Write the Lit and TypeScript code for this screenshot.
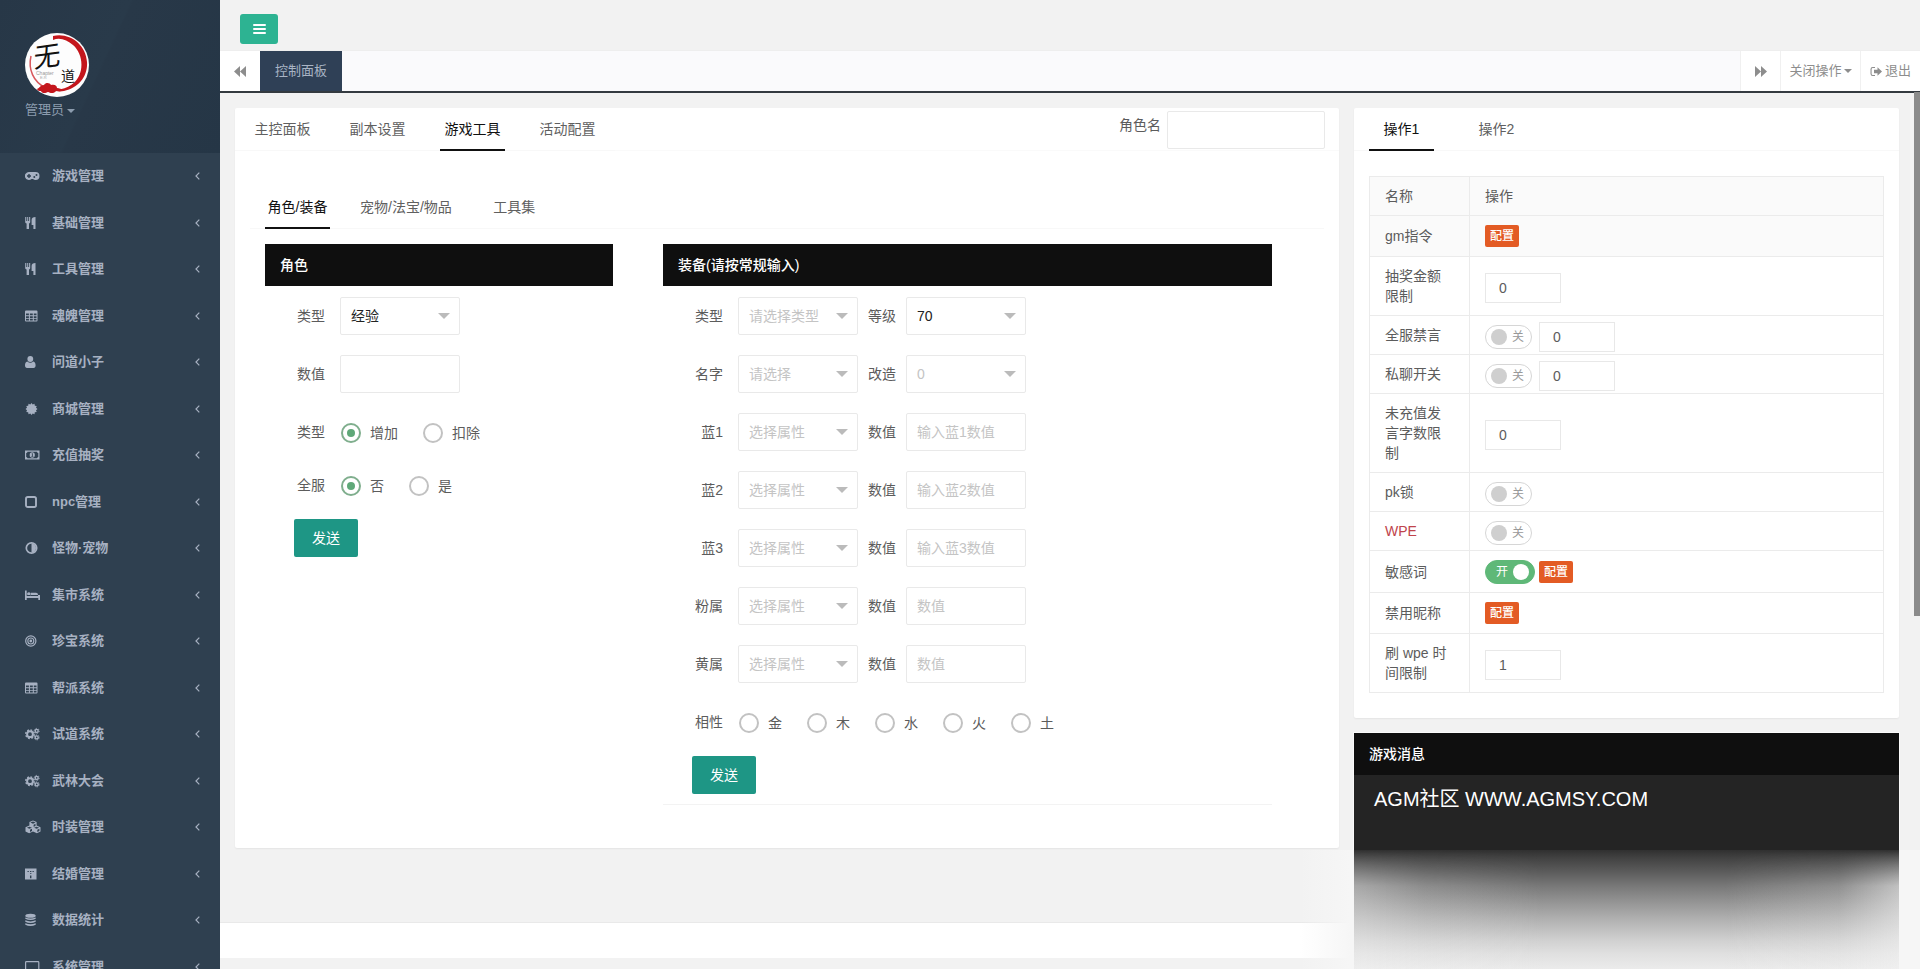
import { LitElement, html, svg, css, nothing } from 'lit';
import type { TemplateResult } from 'lit';
import { customElement, property, state } from 'lit/decorators.js';
import { classMap } from 'lit/directives/class-map.js';

interface MenuItem {
  icon: string;
  label: string;
}

interface Field {
  label: string;
  text?: string;
  select?: boolean;
  filled?: boolean;
}

interface Control {
  kind: 'badge' | 'input' | 'switch';
  value?: string;
  on?: boolean;
}

interface TableRow {
  name: string;
  height: number;
  controls: Control[];
  red?: boolean;
  shaded?: boolean;
}

const MENU: MenuItem[] = [
  { icon: 'gamepad', label: '游戏管理' },
  { icon: 'cutlery', label: '基础管理' },
  { icon: 'cutlery', label: '工具管理' },
  { icon: 'table', label: '魂魄管理' },
  { icon: 'user', label: '问道小子' },
  { icon: 'certificate', label: '商城管理' },
  { icon: 'money', label: '充值抽奖' },
  { icon: 'square', label: 'npc管理' },
  { icon: 'adjust', label: '怪物·宠物' },
  { icon: 'bed', label: '集市系统' },
  { icon: 'target', label: '珍宝系统' },
  { icon: 'table', label: '帮派系统' },
  { icon: 'cogs', label: '试道系统' },
  { icon: 'cogs', label: '武林大会' },
  { icon: 'cubes', label: '时装管理' },
  { icon: 'building', label: '结婚管理' },
  { icon: 'database', label: '数据统计' },
  { icon: 'desktop', label: '系统管理' },
];

const EQUIPMENT: [Field, Field][] = [
  [
    { label: '类型', text: '请选择类型', select: true },
    { label: '等级', text: '70', select: true, filled: true },
  ],
  [
    { label: '名字', text: '请选择', select: true },
    { label: '改造', text: '0', select: true },
  ],
  [
    { label: '蓝1', text: '选择属性', select: true },
    { label: '数值', text: '输入蓝1数值' },
  ],
  [
    { label: '蓝2', text: '选择属性', select: true },
    { label: '数值', text: '输入蓝2数值' },
  ],
  [
    { label: '蓝3', text: '选择属性', select: true },
    { label: '数值', text: '输入蓝3数值' },
  ],
  [
    { label: '粉属', text: '选择属性', select: true },
    { label: '数值', text: '数值' },
  ],
  [
    { label: '黄属', text: '选择属性', select: true },
    { label: '数值', text: '数值' },
  ],
];

const ROWS: TableRow[] = [
  { name: 'gm指令', height: 41, controls: [{ kind: 'badge' }], shaded: true },
  { name: '抽奖金额限制', height: 59, controls: [{ kind: 'input', value: '0' }] },
  {
    name: '全服禁言',
    height: 39,
    controls: [{ kind: 'switch' }, { kind: 'input', value: '0' }],
  },
  {
    name: '私聊开关',
    height: 39,
    controls: [{ kind: 'switch' }, { kind: 'input', value: '0' }],
  },
  {
    name: '未充值发言字数限制',
    height: 79,
    controls: [{ kind: 'input', value: '0' }],
  },
  { name: 'pk锁', height: 39, controls: [{ kind: 'switch' }] },
  { name: 'WPE', height: 39, controls: [{ kind: 'switch' }], red: true },
  {
    name: '敏感词',
    height: 42,
    controls: [{ kind: 'switch', on: true }, { kind: 'badge' }],
  },
  { name: '禁用昵称', height: 41, controls: [{ kind: 'badge' }] },
  {
    name: '刷 wpe 时间限制',
    height: 59,
    controls: [{ kind: 'input', value: '1' }],
  },
];

// 16 x 14 glyphs
const ICONS: Record<string, TemplateResult> = {
  gamepad: svg`<path fill-rule="evenodd" d="M4 3h6.500a4 4 0 0 1 0 8c-1 0-1.800-.4-2.500-1H6.500A4 4 0 1 1 4 3zM3.300 5v1.300H2v1.400h1.300V9h1.400V7.700H6V6.300H4.700V5zM9.300 7a1 1 0 1 0 0 2 1 1 0 0 0 0-2zM11.500 5a1 1 0 1 0 0 2 1 1 0 0 0 0-2z"/>`,
  cutlery: svg`<path d="M.2 1h1.100v4h.9V1h1v4h.9V1h1.100v5c0 .8-.5 1.300-1.200 1.600V13H1.600V7.600C.8 7.300.2 6.800.2 6zM10.500 1v12H8.400V9H6.600V4c0-1.700 1.300-3 3.900-3z"/>`,
  table: svg`<path fill-rule="evenodd" d="M1 1.500h10.500a1 1 0 0 1 1 1v9a1 1 0 0 1-1 1H1a1 1 0 0 1-1-1v-9a1 1 0 0 1 1-1zM1 4.500v1.700h2.900V4.500zm3.900 0v1.700h2.900V4.500zm3.900 0v1.700h2.700V4.500zM1 7.200v1.700h2.900V7.200zm3.900 0v1.700h2.900V7.200zm3.900 0v1.700h2.700V7.200zM1 9.800v1.700h2.900V9.800zm3.900 0v1.700h2.900V9.800zm3.900 0v1.700h2.700V9.800z"/>`,
  user: svg`<circle cx="5.300" cy="4" r="2.900"/><path d="M2.300 6.500a4.500 4.500 0 0 0 6 0C9.800 6.800 10.600 8.500 10.600 10.500c0 1.500-.8 2.500-2 2.500H2C.8 13 0 12 0 10.500c0-2 .8-3.700 2.300-4z"/>`,
  certificate: svg`<path d="M6.500 1l1.200 1.500L9.500 1.800l.3 1.900 1.900.3-.7 1.800L12.500 7 11 8.200l.7 1.800-1.900.3-.3 1.900-1.800-.7L6.500 13l-1.200-1.500-1.800.7-.3-1.900L1.300 10 2 8.200.5 7 2 5.800 1.300 4l1.900-.3.300-1.900 1.800.7z"/>`,
  money: svg`<path fill-rule="evenodd" d="M0 2.500h14.500v9H0zM2.500 3.700A1.500 1.500 0 0 1 1.200 5v4a1.500 1.500 0 0 1 1.300 1.300H12A1.500 1.500 0 0 1 13.300 9V5A1.500 1.500 0 0 1 12 3.700zM7.250 4.300a2.600 2.700 0 1 1 0 5.400 2.600 2.700 0 0 1 0-5.400zM6.400 6h.5v2h-.5v.7h1.900V8h-.5V5.300h-.6z"/>`,
  square: svg`<rect x="1" y="2" width="10" height="10" rx="1.800" fill="none" stroke="currentColor" stroke-width="1.900"/>`,
  adjust: svg`<circle cx="6.500" cy="7" r="5.200" fill="none" stroke="currentColor" stroke-width="1.700"/><path d="M6.500 2.500v9a4.500 4.500 0 0 0 0-9z"/>`,
  bed: svg`<path d="M0 2.500h1.700V8H13V6.800a2 2 0 0 0-2-2H6v2.500h-.8A1.800 1.800 0 1 0 2.400 7H15v5h-1.700v-2H1.700v2H0z"/>`,
  target: svg`<circle cx="5.800" cy="7" r="5.100" fill="none" stroke="currentColor" stroke-width="1.200"/><circle cx="5.800" cy="7" r="3" fill="none" stroke="currentColor" stroke-width="1.100"/><circle cx="5.800" cy="7" r="1.400"/>`,
  cogs: svg`<circle cx="5" cy="7.200" r="2.900" fill="none" stroke="currentColor" stroke-width="2"/><circle cx="5" cy="7.200" r="4.300" fill="none" stroke="currentColor" stroke-width="1.400" stroke-dasharray="1.800 1.570"/><circle cx="11.700" cy="3.900" r="1.500" fill="none" stroke="currentColor" stroke-width="1.400"/><circle cx="11.700" cy="3.900" r="2.500" fill="none" stroke="currentColor" stroke-width=".9" stroke-dasharray="1.300 1.300"/><circle cx="11.700" cy="10.400" r="1.500" fill="none" stroke="currentColor" stroke-width="1.400"/><circle cx="11.700" cy="10.400" r="2.500" fill="none" stroke="currentColor" stroke-width=".9" stroke-dasharray="1.300 1.300"/>`,
  cubes: svg`<path fill-rule="evenodd" d="M8 .5l3.600 1.400v3.700L15.500 7.200v4.200L11.900 13.300 8 11.500 4.100 13.300.5 11.400V7.200l3.900-1.600V1.900zM5.400 2.600 8 3.700l2.600-1.100L8 1.600zM8.600 4.700v2.100L10.500 6V3.800zM1.900 7.700l2.500 1.100 2.500-1.100-2.500-1zM5 9.700v2.300l2-1V8.800zM9.100 7.700l2.500 1.100 2.500-1.100-2.500-1zM12.300 9.700v2.300l2.100-1V8.800z"/>`,
  building: svg`<path fill-rule="evenodd" d="M0 1.500h11.500v11H0zM2.500 4v.9h1.300V4zm5 0v.9h1.300V4zM5 4v.9h1.400V4zm0 2.200v.9h1.400v-.9zm0 2.200v2.800h1.400V8.400z"/>`,
  database: svg`<ellipse cx="5.500" cy="2.800" rx="5.200" ry="2"/><path d="M.3 4.400q5.200 2.300 10.400 0v1.400q-5.200 2.600-10.400 0zM.3 7.300q5.200 2.300 10.400 0v1.400q-5.200 2.600-10.400 0zM.3 10.200q5.200 2.300 10.400 0v1.600q-5.200 2.600-10.400 0z"/>`,
  desktop: svg`<rect x=".6" y="1.600" width="13.200" height="9" rx=".8" fill="none" stroke="currentColor" stroke-width="1.200"/><path d="M5.500 11h3.500l.6 2.300H5z"/>`,
};

@customElement('side-menu')
export class SideMenu extends LitElement {
  static styles = css`
    :host {
      display: block;
      width: 220px;
      height: 100%;
      overflow: hidden;
      background: #2f4050;
      color: #a7b1c2;
      font-size: 13px;
    }

    .profile {
      box-sizing: border-box;
      height: 153px;
      padding: 33px 25px 0;
      background: linear-gradient(115deg, #273747 0%, #293a4a 45%, #283848 46%, #253646 100%);
      color: #8c9cae;
    }

    .logo {
      display: block;
      width: 64px;
      height: 64px;
    }

    .account {
      display: flex;
      align-items: center;
      gap: 3px;
      height: 26px;
    }

    .caret {
      border: 4px solid transparent;
      border-top-color: currentColor;
      border-bottom: 0;
      margin-top: 2px;
    }

    .entry {
      display: flex;
      align-items: center;
      height: 46.500px;
      padding: 0 20px 0 25px;
      font-weight: 600;
    }

    .icon {
      width: 16px;
      height: 14px;
      margin-right: 11px;
      fill: currentColor;
    }

    .label {
      flex: 1;
    }

    .arrow {
      width: 5px;
      height: 8px;
      fill: none;
      stroke: currentColor;
      stroke-width: 1.200;
    }
  `;

  render() {
    return html`
      <div class="profile">
        ${this.renderLogo()}
        <div class="account">管理员<span class="caret"></span></div>
      </div>
      ${MENU.map(
        (item) => html`<div class="entry">
          <svg class="icon" viewBox="0 0 16 14">${ICONS[item.icon]}</svg>
          <span class="label">${item.label}</span>
          <svg class="arrow" viewBox="0 0 5 8"><path d="M4.300.7 1 4l3.300 3.300" /></svg>
        </div>`
      )}
    `;
  }

  private renderLogo() {
    return html`<svg class="logo" viewBox="0 0 64 64">
      <circle cx="32" cy="32" r="32" fill="#fdfdfd" />
      <path
        fill="#c4161c"
        d="M28 3C44-1 61 11 62 29c1 14-8 26-23 29-5 1-9 0-12-1 12 0 22-4 27-14 5-11 2-24-6-31C42 7 35 4 28 7z"
      />
      <path fill="none" stroke="#d8575b" stroke-width="1.500" d="M6 23C3 36 8 49 21 55" />
      <path
        fill="#c4161c"
        d="M12 56c3-1 3-4 7-4 2-3 6-2 7 0 4-1 6 1 6 3 3 0 5 2 8 1-2 3-7 2-9 2-2 3-6 2-8 1-2 1-6 2-7-1-2 0-3 0-4-2z"
      />
      <text
        x="9"
        y="33"
        font-size="27"
        font-weight="400"
        fill="#111"
        transform="rotate(-8 22 24) skewX(-8) translate(3 0)"
      >
        无
      </text>
      <text x="36" y="48" font-size="14" fill="#111">道</text>
      <text x="11" y="42" font-size="5" fill="#999">Chapter</text>
      <text x="15" y="46" font-size="4" fill="#aaa">E.R</text>
    </svg>`;
  }
}

@customElement('tab-strip')
export class TabStrip extends LitElement {
  static styles = css`
    :host {
      display: flex;
      height: 42px;
      border-bottom: 1px solid #f8f8f8;
    }

    .tab {
      position: relative;
      box-sizing: border-box;
      min-width: 95px;
      padding: 0 15px;
      line-height: 42px;
      text-align: center;
      color: #606060;
      white-space: nowrap;
      cursor: pointer;
    }

    .tab.active {
      color: #111;
    }

    .tab.active::after {
      content: '';
      position: absolute;
      left: 15px;
      right: 15px;
      bottom: -1px;
      height: 2px;
      background: #111;
    }
  `;

  @property({ type: Array })
  tabs: string[] = [];

  @property({ type: Number })
  active = 0;

  render() {
    return this.tabs.map(
      (tab, i) => html`<div
        class=${classMap({ tab: true, active: i === this.active })}
        @click=${() => (this.active = i)}
      >
        ${tab}
      </div>`
    );
  }
}

@customElement('app-root')
export class AppRoot extends LitElement {
  static styles = css`
    :host {
      display: flex;
      height: 100vh;
      overflow: hidden;
      background: #f2f2f2;
      color: #5c5c5c;
      font: 14px/20px 'Liberation Sans', 'Noto Sans CJK SC', sans-serif;
    }

    .page {
      position: relative;
      flex: 1;
      display: flex;
      flex-direction: column;
      min-width: 0;
    }

    .topbar {
      box-sizing: border-box;
      height: 50px;
      padding: 14px 20px 0;
    }

    .toggle {
      display: flex;
      flex-direction: column;
      align-items: center;
      justify-content: center;
      gap: 2px;
      width: 38px;
      height: 30px;
      border-radius: 3px;
      background: #2db392;
    }

    .toggle span {
      width: 13px;
      height: 2px;
      border-radius: 1px;
      background: #fff;
    }

    .pages {
      display: flex;
      box-sizing: border-box;
      height: 43px;
      border-top: 1px solid #eee;
      border-bottom: 2px solid #343a40;
      background: #fafafc;
      color: #8d8d8d;
    }

    .pages > div {
      display: flex;
      align-items: center;
      justify-content: center;
      box-sizing: border-box;
      background: #fff;
    }

    .pages .scroll {
      width: 40px;
    }

    .pages .current {
      width: 82px;
      background: #2f4056;
      color: #a9b4c4;
      font-size: 13px;
    }

    .pages .spacer {
      flex: 1;
      background: none;
    }

    .pages .action {
      border-left: 1px solid #f0f0f0;
      font-size: 13px;
      gap: 2px;
    }

    .close {
      width: 80px;
    }

    .exit {
      width: 60px;
    }

    .pages svg {
      fill: #8d8d8d;
    }

    .caret {
      border: 4px solid transparent;
      border-top-color: currentColor;
      border-bottom: 0;
    }

    .content {
      flex: 1;
      display: grid;
      grid-template-columns: 1104px 545px;
      column-gap: 15px;
      align-items: start;
      padding: 15px 15px 0;
    }

    .panel {
      box-sizing: border-box;
      border-radius: 2px;
      background: #fff;
      box-shadow: 0 1px 2px rgba(0, 0, 0, 0.06);
    }

    .workspace {
      height: 740px;
    }

    .head {
      display: flex;
      justify-content: space-between;
      height: 43px;
      border-bottom: 1px solid #fafafa;
      box-sizing: border-box;
    }

    .role {
      display: flex;
      gap: 6px;
      padding: 3px 14px 0 0;
      line-height: 29px;
    }

    .role .box {
      width: 158px;
    }

    .tools {
      padding: 35px 15px 0;
    }

    .cards {
      display: flex;
      gap: 50px;
      padding: 15px 15px 0;
    }

    .card-head {
      height: 42px;
      padding-left: 15px;
      background: #0f0f0f;
      color: #fff;
      line-height: 42px;
      font-weight: 500;
    }

    .card {
      box-sizing: border-box;
    }

    .card.narrow {
      width: 348px;
    }

    .card.wide {
      width: 609px;
      height: 561px;
      border-bottom: 1px solid #f3f3f3;
    }

    .form {
      padding: 11px 0 0 27px;
    }

    .row {
      display: flex;
      align-items: center;
      height: 38px;
      margin-bottom: 20px;
    }

    .row.radios {
      margin-bottom: 15px;
    }

    .name {
      width: 33px;
      margin-right: 15px;
      text-align: right;
    }

    .name.second {
      width: 38px;
      margin-right: 10px;
    }

    .box {
      display: flex;
      align-items: center;
      justify-content: space-between;
      box-sizing: border-box;
      width: 120px;
      height: 38px;
      padding: 0 9px 0 10px;
      border: 1px solid #e9e9e9;
      border-radius: 2px;
      background: #fff;
      color: #c4c4c4;
    }

    .box.filled {
      color: #222;
    }

    .box .drop {
      border: 6px solid transparent;
      border-top-color: #bbb;
      border-bottom: 0;
    }

    .radio {
      display: flex;
      align-items: center;
      gap: 9px;
      margin: 1px 24px 0 1px;
    }

    .radio i {
      display: flex;
      align-items: center;
      justify-content: center;
      box-sizing: border-box;
      width: 20px;
      height: 20px;
      border: 2px solid #c2c2c2;
      border-radius: 50%;
    }

    .radio.on i {
      border-color: #7fae8d;
    }

    .radio.on i::after {
      content: '';
      width: 8px;
      height: 8px;
      border-radius: 50%;
      background: #5fa878;
    }

    .send {
      width: 64px;
      height: 38px;
      margin-left: 2px;
      border-radius: 2px;
      background: #1e9685;
      color: #fff;
      line-height: 38px;
      text-align: center;
    }

    .side {
      display: flex;
      flex-direction: column;
      gap: 15px;
    }

    .operations {
      height: 610px;
    }

    .table {
      margin: 25px 15px 0;
      border: 1px solid #ebebeb;
      border-bottom: 0;
    }

    .line {
      display: grid;
      grid-template-columns: 100px 1fr;
      box-sizing: border-box;
      min-height: 39px;
      border-bottom: 1px solid #ebebeb;
    }

    .line.shaded {
      background: #fafafa;
    }

    .line > div {
      display: flex;
      align-items: center;
      padding: 0 15px;
    }

    .line > div:first-child {
      border-right: 1px solid #ebebeb;
    }

    .line > .red {
      color: #c0444c;
    }

    .line .controls {
      gap: 4px;
    }

    .badge {
      width: 34px;
      height: 22px;
      border-radius: 2px;
      background: #e35b24;
      color: #fff;
      font-size: 12px;
      font-weight: 500;
      line-height: 22px;
      text-align: center;
    }

    .number {
      box-sizing: border-box;
      width: 76px;
      height: 30px;
      padding-left: 13px;
      margin-top: 3px;
      border: 1px solid #e8e8e8;
      background: #fff;
      line-height: 29px;
    }

    .switch {
      display: flex;
      align-items: center;
      justify-content: space-between;
      box-sizing: border-box;
      height: 24px;
      margin-top: 4px;
      padding: 0 7px 0 5px;
      width: 47px;
      margin-right: 3px;
      border: 1px solid #d6d6d6;
      border-radius: 12px;
      color: #999;
      font-size: 12px;
    }

    .switch::before {
      content: '';
      width: 16px;
      height: 16px;
      border-radius: 50%;
      background: #cfcfcf;
    }

    .switch.on {
      flex-direction: row-reverse;
      width: 50px;
      margin: 1px 0 0;
      padding: 0 5px 0 10px;
      border-color: #5fb878;
      background: #5fb878;
      color: #fff;
    }

    .switch.on::before {
      background: #fff;
    }

    .news {
      height: 117px;
      background: #242424;
      color: #fff;
      box-shadow: 0 0 0 1px #fafafa;
    }

    .news p {
      margin: 0;
      padding: 11px 20px;
      font-size: 20px;
      line-height: 27px;
    }

    .footer {
      height: 36px;
      margin-bottom: 11px;
      border-top: 1px solid #e9e9e9;
      box-sizing: border-box;
      background: #fff;
    }

    /* frosted layer that hangs under the message card */
    .frost {
      position: absolute;
      right: 0;
      bottom: 0;
      box-sizing: border-box;
      width: 620px;
      height: 119px;
      padding: 0 21px 0 54px;
      background: linear-gradient(90deg, rgba(246, 246, 246, 0), #f6f6f6 50px);
    }

    .shade {
      position: relative;
      height: 100%;
      background: linear-gradient(
        #303030 0,
        #424242 8px,
        #5c5c5c 22px,
        #787878 36px,
        #949494 52px,
        #b2b2b2 70px,
        #d0d0d0 90px,
        #e0e0e0 104px,
        #ebebeb 119px
      );
    }

    .shade::after {
      content: '';
      position: absolute;
      inset: 0;
      background: linear-gradient(
        90deg,
        rgba(242, 242, 242, 0.4),
        rgba(242, 242, 242, 0.17) 70px,
        transparent 190px,
        transparent 370px,
        rgba(242, 242, 242, 0.2) 485px,
        rgba(242, 242, 242, 0.6)
      );
      mask-image: linear-gradient(transparent, #000 36px);
    }

    .scrollbar {
      position: absolute;
      top: 92px;
      right: 0;
      width: 6px;
      height: 524px;
      background: #8b8b8b;
    }
  `;

  @state()
  private direction = 0;

  @state()
  private everyone = 0;

  @state()
  private element = -1;

  render() {
    return html`
      <side-menu></side-menu>
      <div class="page">
        <div class="topbar">
          <div class="toggle"><span></span><span></span><span></span></div>
        </div>
        ${this.renderPages()}
        <div class="content">
          ${this.renderWorkspace()}
          <div class="side">${this.renderOperations()} ${this.renderNews()}</div>
        </div>
        <div class="footer"></div>
        <div class="frost"><div class="shade"></div></div>
        <div class="scrollbar"></div>
      </div>
    `;
  }

  private renderPages() {
    return html`<div class="pages">
      <div class="scroll">
        <svg width="12" height="11" viewBox="0 0 12 11">
          <path d="M6 0v11L0 5.500zM12 0v11L6 5.500z" />
        </svg>
      </div>
      <div class="current">控制面板</div>
      <div class="spacer"></div>
      <div class="scroll action">
        <svg width="12" height="11" viewBox="0 0 12 11">
          <path d="M0 0v11l6-5.500zM6 0v11l6-5.500z" />
        </svg>
      </div>
      <div class="close action">关闭操作<span class="caret"></span></div>
      <div class="exit action">
        <svg width="13" height="11" viewBox="0 0 12 11">
          <path d="M4.500 1H2.200A2.200 2.200 0 0 0 0 3.200v4.600A2.200 2.200 0 0 0 2.200 10h2.300V8.900H2.300A1.200 1.200 0 0 1 1.100 7.700V3.300a1.200 1.200 0 0 1 1.200-1.200h2.200zM7 1.300v2.500H3.500v3.400H7v2.500l4.500-4.200z" />
        </svg>
        退出
      </div>
    </div>`;
  }

  private renderWorkspace() {
    return html`<div class="panel workspace">
      <div class="head">
        <tab-strip
          .tabs=${['主控面板', '副本设置', '游戏工具', '活动配置']}
          active="2"
        ></tab-strip>
        <div class="role">角色名<div class="box"></div></div>
      </div>
      <div class="tools">
        <tab-strip .tabs=${['角色/装备', '宠物/法宝/物品', '工具集']}></tab-strip>
        <div class="cards">${this.renderRole()} ${this.renderEquipment()}</div>
      </div>
    </div>`;
  }

  private renderRole() {
    return html`<div class="card narrow">
      <div class="card-head">角色</div>
      <div class="form">
        <div class="row">
          ${this.renderField({ label: '类型', text: '经验', select: true, filled: true })}
        </div>
        <div class="row">${this.renderField({ label: '数值' })}</div>
        ${this.renderRadios('类型', ['增加', '扣除'], this.direction, (i) => {
          this.direction = i;
        })}
        ${this.renderRadios('全服', ['否', '是'], this.everyone, (i) => {
          this.everyone = i;
        })}
        <div class="send">发送</div>
      </div>
    </div>`;
  }

  private renderEquipment() {
    return html`<div class="card wide">
      <div class="card-head">装备(请按常规输入)</div>
      <div class="form">
        ${EQUIPMENT.map(
          ([first, second]) => html`<div class="row">
            ${this.renderField(first)} ${this.renderField(second, true)}
          </div>`
        )}
        ${this.renderRadios('相性', ['金', '木', '水', '火', '土'], this.element, (i) => {
          this.element = i;
        })}
        <div class="send">发送</div>
      </div>
    </div>`;
  }

  private renderField(field: Field, second = false) {
    return html`<span class=${classMap({ name: true, second })}>${field.label}</span>
      <div class=${classMap({ box: true, filled: !!field.filled })}>
        <span>${field.text ?? nothing}</span>
        ${field.select ? html`<span class="drop"></span>` : nothing}
      </div>`;
  }

  private renderRadios(
    label: string,
    options: string[],
    selected: number,
    onSelect: (i: number) => void
  ) {
    return html`<div class="row radios">
      <span class="name">${label}</span>
      ${options.map(
        (option, i) => html`<div
          class=${classMap({ radio: true, on: i === selected })}
          @click=${() => onSelect(i)}
        >
          <i></i>${option}
        </div>`
      )}
    </div>`;
  }

  private renderOperations() {
    return html`<div class="panel operations">
      <tab-strip .tabs=${['操作1', '操作2']}></tab-strip>
      <div class="table">
        <div class="line shaded">
          <div>名称</div>
          <div>操作</div>
        </div>
        ${ROWS.map(
          (row) => html`<div
            class=${classMap({ line: true, shaded: !!row.shaded })}
            style="height: ${row.height}px"
          >
            <div class=${classMap({ red: !!row.red })}>${row.name}</div>
            <div class="controls">${row.controls.map((c) => this.renderControl(c))}</div>
          </div>`
        )}
      </div>
    </div>`;
  }

  private renderControl(control: Control) {
    switch (control.kind) {
      case 'badge':
        return html`<span class="badge">配置</span>`;
      case 'input':
        return html`<div class="number">${control.value}</div>`;
      default:
        return html`<div class=${classMap({ switch: true, on: !!control.on })}>
          ${control.on ? '开' : '关'}
        </div>`;
    }
  }

  private renderNews() {
    return html`<div class="news">
      <div class="card-head">游戏消息</div>
      <p>AGM社区 WWW.AGMSY.COM</p>
    </div>`;
  }
}
